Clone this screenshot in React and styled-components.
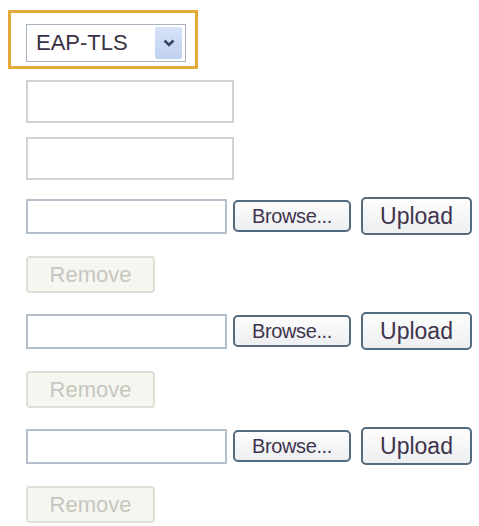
import React from "react"
import styled, { createGlobalStyle } from "styled-components"

const GlobalStyle = createGlobalStyle`
  html, body {
    margin: 0;
    padding: 0;
    background: #ffffff;
  }
  body {
    font-family: "Liberation Sans", Arial, sans-serif;
  }
`

const certSlots = [1, 2, 3]

const App = () => {
  return (
    <>
      <GlobalStyle />
      <Page>
        <Highlight>
          <Select>
            <SelectValue>EAP-TLS</SelectValue>
            <DropButton>
              <svg width="12" height="8" viewBox="0 0 12 8">
                <path d="M1.5 1.5 L6 6 L10.5 1.5" fill="none" stroke="#3b4660" strokeWidth="2.6" />
              </svg>
            </DropButton>
          </Select>
        </Highlight>

        <TextField />
        <TextField $second />

        {certSlots.map((slot) => (
          <CertBlock key={slot} $first={slot === 1}>
            <UploadRow>
              <PathField />
              <BrowseButton>Browse...</BrowseButton>
              <UploadButton>Upload</UploadButton>
            </UploadRow>
            <RemoveButton disabled>Remove</RemoveButton>
          </CertBlock>
        ))}
      </Page>
    </>
  )
}

export default App

const Page = styled.div`
  display: flex;
  flex-direction: column;
  align-items: flex-start;
  padding: 10px 0 0 26px;
`

const Highlight = styled.div`
  margin-left: -18px;
  border: 3px solid #e3a93b;
  padding: 11px 9px 4px 15px;
`

const Select = styled.div`
  box-sizing: border-box;
  width: 160px;
  height: 38px;
  display: flex;
  align-items: center;
  justify-content: space-between;
  border: 1px solid #a9b2c0;
  background: #ffffff;
  padding: 2px 3px 2px 9px;
`

const SelectValue = styled.span`
  font-size: 22px;
  color: #3a3145;
`

const DropButton = styled.div`
  width: 27px;
  height: 32px;
  display: flex;
  align-items: center;
  justify-content: center;
  background: linear-gradient(#d6e2f7, #bfd1f0);
  border-radius: 2px;
`

const TextField = styled.div`
  box-sizing: border-box;
  width: 208px;
  height: 43px;
  border: 2px solid #d2d2d2;
  background: #ffffff;
  margin-top: ${(p) => (p.$second ? "14px" : "11px")};
`

const CertBlock = styled.div`
  display: flex;
  flex-direction: column;
  align-items: flex-start;
  margin-top: ${(p) => (p.$first ? "17px" : "19px")};
`

const UploadRow = styled.div`
  display: flex;
  align-items: center;
  height: 38px;
`

const PathField = styled.div`
  box-sizing: border-box;
  width: 201px;
  height: 35px;
  border: 2px solid #b4c0cc;
  background: #ffffff;
`

const NativeButton = styled.button`
  box-sizing: border-box;
  font-family: "Liberation Sans", Arial, sans-serif;
  color: #40344d;
  border: 2px solid #546a7e;
  border-radius: 5px;
  background: linear-gradient(#fdfdfd, #eceef0);
  padding: 0;
  cursor: pointer;
`

const BrowseButton = styled(NativeButton)`
  width: 118px;
  height: 32px;
  margin-left: 6px;
  font-size: 20px;
  letter-spacing: -0.4px;
`

const UploadButton = styled(NativeButton)`
  width: 111px;
  height: 38px;
  margin-left: 10px;
  font-size: 23px;
`

const RemoveButton = styled.button`
  box-sizing: border-box;
  width: 129px;
  height: 37px;
  margin-top: 21px;
  font-family: "Liberation Sans", Arial, sans-serif;
  font-size: 22px;
  color: #c6c6bf;
  border: 2px solid #dfdfd8;
  border-radius: 4px;
  background: #f6f6f1;
  padding: 0;
`
